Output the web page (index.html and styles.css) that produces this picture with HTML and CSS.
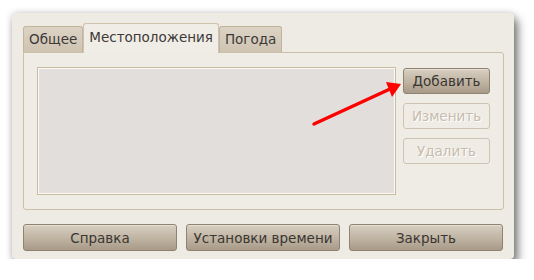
FILE: index.html
```html
<!DOCTYPE html>
<html>
<head>
	<meta charset="utf-8">
	<title>Часы и время</title>
	<link rel="stylesheet" href="styles.css">
</head>
<body>
	<div class="window">
		<div class="notebook">
			<ul class="tabs">
				<li class="tab">Общее</li>
				<li class="tab active">Местоположения</li>
				<li class="tab">Погода</li>
			</ul>
			<div class="page">
				<div class="list"></div>
				<div class="side">
					<button class="btn">Добавить</button>
					<button class="btn" disabled>Изменить</button>
					<button class="btn" disabled>Удалить</button>
				</div>
			</div>
		</div>
		<div class="actions">
			<button class="btn wide">Справка</button>
			<button class="btn wide">Установки времени</button>
			<button class="btn wide">Закрыть</button>
		</div>
	</div>

	<!-- pointer drawn over the screenshot -->
	<svg class="arrow" width="534" height="280" viewBox="0 0 534 280">
		<line x1="314" y1="124" x2="390" y2="89" stroke="#f00" stroke-width="3.5" stroke-linecap="round"/>
		<polygon points="401,84 386,82 392,97" fill="#f00"/>
	</svg>
</body>
</html>
```

FILE: styles.css
```css
* {
  box-sizing: border-box;
}

body {
  margin: 0;
  padding: 13px 0 0 12px;
  background: #fff;
  font-family: "DejaVu Sans", sans-serif;
  font-size: 13.5px;
  color: #3c3a37;
}

.window {
  width: 502px;
  height: 246px;
  padding: 9px 0 0 11px;
  background: #eeeae4;
  border-radius: 4px;
  box-shadow: 4px 6px 10px rgba(0,0,0,0.5), 0 0 7px rgba(0,0,0,0.18);
}

.notebook {
  width: 481px;
}

.tabs {
  display: flex;
  align-items: flex-end;
  margin: 0;
  padding: 0;
  list-style: none;
  height: 30px;
}

.tab {
  height: 26px;
  padding: 4px 5px 0 5px;
  background: linear-gradient(to bottom, #dcd3c5 0%, #cfc4b2 100%);
  border: 1px solid #c2b49c;
  border-bottom: none;
  border-radius: 3px 3px 0 0;
  white-space: nowrap;
}

.tab.active {
  height: 30px;
  padding: 5px 5px 0 5px;
  background: #f0ece6;
  margin-bottom: -1px;
  position: relative;
  border-color: #cfc3ae;
}

.page {
  display: flex;
  gap: 7px;
  height: 158px;
  padding: 14px 0 0 13px;
  background: #efebe5;
  border: 1px solid #cbbfa9;
  border-radius: 0 3px 3px 3px;
}

.list {
  width: 359px;
  height: 128px;
  background: #e1dedb;
  border: 1px solid #c9bb9f;
  box-shadow: 0 0 0 1px #fbf9f6 inset;
}

.side {
  display: flex;
  flex-direction: column;
  gap: 9px;
  padding-top: 1px;
}

.btn {
  width: 87px;
  height: 26px;
  padding: 0;
  font-family: inherit;
  font-size: 13.5px;
  color: #3a3632;
  background: linear-gradient(to bottom, #d8cfc2 0%, #bfb3a2 55%, #a89a87 100%);
  border: 1px solid #8f826f;
  border-radius: 3px;
  box-shadow: 0 1px 0 rgba(255,255,255,0.35) inset;
}

.btn:disabled {
  color: #c7bcad;
  text-shadow: 1px 1px 0 #fff;
  background: #efebe5;
  border-color: #cfc4b1;
  box-shadow: none;
}

.actions {
  display: flex;
  gap: 9px;
  margin-top: 14px;
}

.btn.wide {
  width: 154px;
  height: 27px;
}

.arrow {
  position: absolute;
  left: 0;
  top: 0;
}
```
